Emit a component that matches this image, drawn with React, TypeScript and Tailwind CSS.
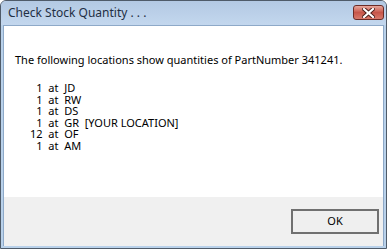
import React from 'react';

const rows = [
  { qty: '1', loc: 'JD' },
  { qty: '1', loc: 'RW' },
  { qty: '1', loc: 'DS' },
  { qty: '1', loc: 'GR  [YOUR LOCATION]' },
  { qty: '12', loc: 'OF' },
  { qty: '1', loc: 'AM' },
];

// Figure space keeps single digits right-aligned under "12"
const listText = rows
  .map((r) => `${r.qty.length === 1 ? '\u2007' : ''}${r.qty}  at  ${r.loc}`)
  .join('\n');

const CloseButton: React.FC = () => (
  <div className="flex h-[15px] w-[31px] items-center justify-center rounded-[3px] border border-[#6b2b26] bg-gradient-to-b from-[#e6a79c] via-[#c7564a] to-[#d8796b]">
    <svg width="13" height="10" viewBox="0 0 13 10">
      <path d="M2 1 L11 9 M11 1 L2 9" stroke="#4a1c18" strokeWidth="4" strokeLinecap="square" />
      <path d="M2 1 L11 9 M11 1 L2 9" stroke="#ffffff" strokeWidth="2.2" strokeLinecap="square" />
    </svg>
  </div>
);

export default function App() {
  return (
    <div className="h-[249px] w-[389px] bg-white" style={{ fontFamily: '"Noto Sans", "Open Sans", sans-serif' }}>
      <div className="flex h-[249px] w-[387px] flex-col rounded-t-[6px] border border-[#4f5b69] bg-[#b9d1ea]">
        {/* Titelleiste */}
        <div className="flex h-[24px] items-center justify-between rounded-t-[5px] bg-gradient-to-b from-[#b3c9e3] to-[#c3d7ee] pl-[7px] pr-[2px]">
          <span className="text-[12px] leading-none text-[#1f2f44]">Check Stock Quantity . . .</span>
          <div className="-mt-[1px]">
            <CloseButton />
          </div>
        </div>
        {/* Inhalt */}
        <div className="mx-[2px] mb-[2px] flex flex-1 flex-col border border-b-0 border-[#8ea9c8]">
          <div className="flex-1 bg-white pl-[11px] pt-[27px] text-[11px] text-black">
            <p className="leading-[13px]">The following locations show quantities of PartNumber 341241.</p>
            <div className="mt-[16px] whitespace-pre pl-[15px] leading-[11.5px]">{listText}</div>
          </div>
          <div className="flex h-[49px] justify-end bg-[#f0f0f0] pr-[4px] pt-[12px]">
            <button className="h-[25px] w-[88px] border-2 border-[#707070] bg-[#efefef] text-[11px] text-black">
              OK
            </button>
          </div>
        </div>
      </div>
    </div>
  );
}
